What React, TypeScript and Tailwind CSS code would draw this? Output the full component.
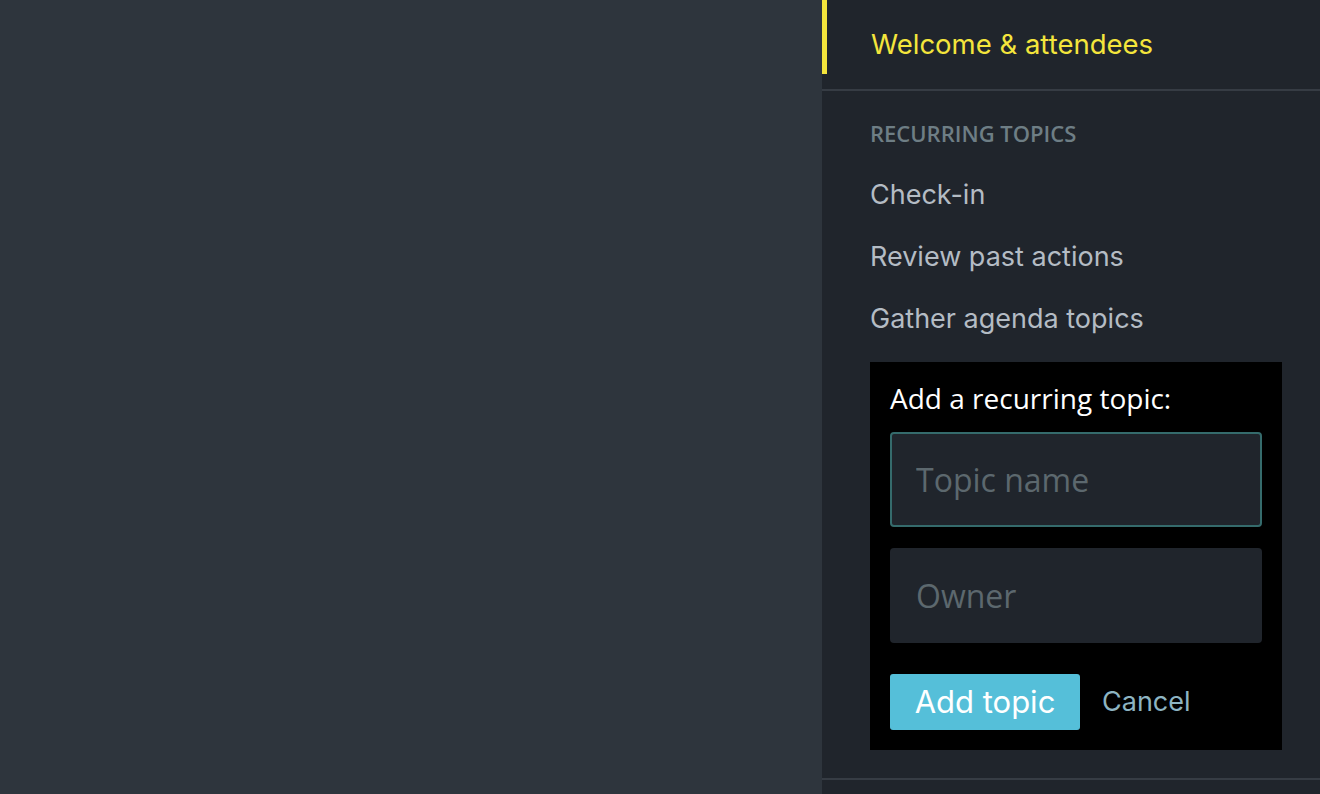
import { useState } from "react";

const sans = "font-['Inter','Roboto',sans-serif]";
const open = "font-['Open_Sans','Noto_Sans',sans-serif]";

const recurring = ["Check-in", "Review past actions", "Gather agenda topics"];

export default function App() {
  const [topic, setTopic] = useState("");
  const [owner, setOwner] = useState("");

  return (
    <div className="flex h-[794px] w-full overflow-hidden bg-[#2e353d]">
      <main className="flex-1" />

      <aside className={`w-[498px] bg-[#20252c] ${sans}`}>
        <div className="pb-[15px] border-b-2 border-[#363c44]">
          <div className="h-[74px] border-l-[5px] border-[#f4e53c] pl-[44px] pt-[26px] text-[27.5px] leading-[36px] text-[#f4e53c]">
            Welcome &amp; attendees
          </div>
        </div>

        <div className="pl-[48px] pr-[38px] pt-[30px] pb-[28px] border-b-2 border-[#363c44]">
          <h4 className={`${open} text-[22px] font-semibold text-[#6e7e85] leading-[24px]`}>
            RECURRING TOPICS
          </h4>

          <ul className="mt-[34px] flex flex-col gap-[30px] text-[27px] leading-[32px] text-[#b4bcc4]">
            {recurring.map((item) => (
              <li key={item}>{item}</li>
            ))}
          </ul>

          <form
            className="mt-[27px] bg-black p-[20px] pt-[17px]"
            onSubmit={(e) => e.preventDefault()}
          >
            <label className={`${open} block text-[28px] leading-[38px] text-white`}>
              Add a recurring topic:
            </label>
            <input
              value={topic}
              onChange={(e) => setTopic(e.target.value)}
              placeholder="Topic name"
              className={`${open} mt-[15px] block h-[95px] w-full rounded-[4px] border-2 border-[#356b6c] bg-[#20252c] px-[24px] text-[32px] text-white placeholder:text-[#5c686e] outline-none`}
            />
            <input
              value={owner}
              onChange={(e) => setOwner(e.target.value)}
              placeholder="Owner"
              className={`${open} mt-[21px] block h-[95px] w-full rounded-[4px] bg-[#20252c] px-[26px] text-[32px] text-white placeholder:text-[#5c686e] outline-none`}
            />
            <div className="mt-[31px] flex items-center gap-[22px]">
              <button
                type="submit"
                className="h-[56px] w-[190px] rounded-[3px] bg-[#55bfd9] text-[31px] text-white"
              >
                Add topic
              </button>
              <button type="button" className="text-[27px] text-[#8db4c2]">
                Cancel
              </button>
            </div>
          </form>
        </div>
      </aside>
    </div>
  );
}
